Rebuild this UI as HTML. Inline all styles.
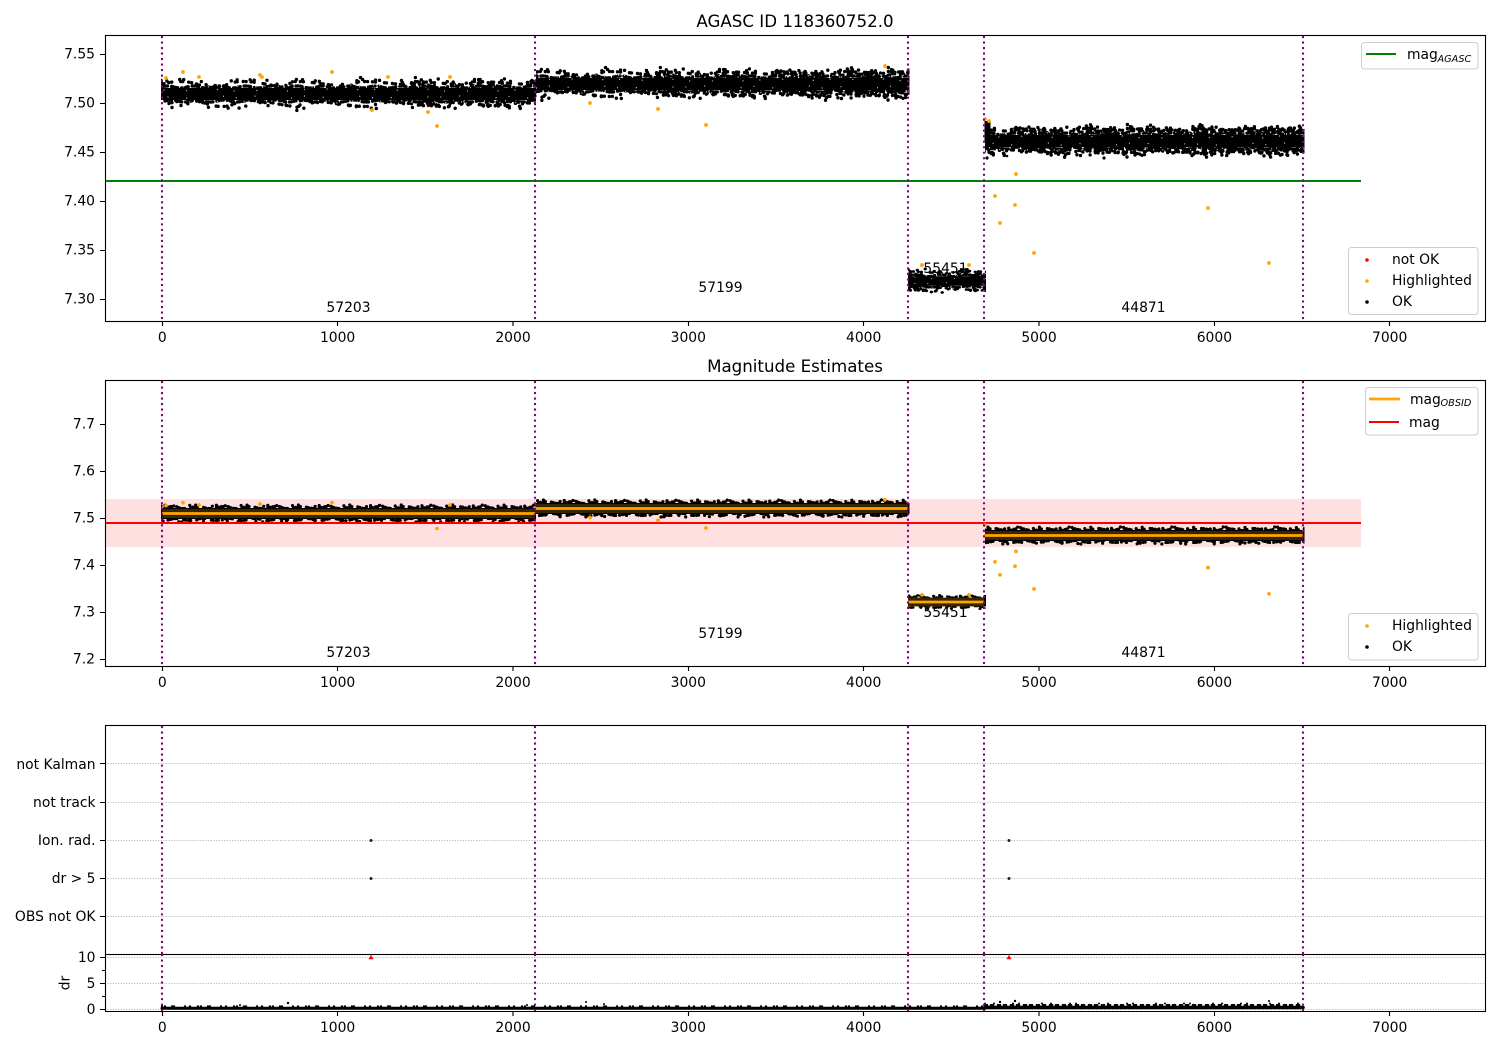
<!DOCTYPE html>
<html><head><meta charset="utf-8"><title>AGASC ID 118360752.0</title>
<style>
html,body{margin:0;padding:0;background:#fff;width:1500px;height:1050px;overflow:hidden}
svg{display:block}
text{font-family:"DejaVu Sans","Liberation Sans",sans-serif;font-size:13.89px;fill:#000}
.r{text-anchor:end}.c{text-anchor:middle}
.t{font-size:16.67px}
.s{font-size:9.72px;font-style:italic}
.ax{fill:none;stroke:#000;stroke-width:1.11}
.pu{stroke:#800080;stroke-width:2.08;stroke-dasharray:2.08 3.43;fill:none}
.gr{stroke:#b0b0b0;stroke-width:1;stroke-dasharray:1 1.65;fill:none}
.lg{fill:#fff;fill-opacity:.8;stroke:#ccc;stroke-width:1}
.o{fill:#ffa500}
.o circle{r:1.9px}
</style></head><body>
<svg width="1500" height="1050" viewBox="0 0 1500 1050" xmlns="http://www.w3.org/2000/svg">
<defs>
<path id="w" d="M0 0q7 -2 13 0t13 0t13 0t13 0t13 0t13 0t13 0t13 0t13 0t13 0t13 0t13 0t13 0t13 0t13 0t13 0t13 0t13 0t13 0t13 0t13 0t13 0t13 0t13 0t13 0t13 0t13 0t13 0t13 0t13 0t13 0t13 0t13 0t13 0t13 0t13 0t13 0t13 0t13 0t13 0t13 0t13 0t13 0t13 0t13 0t13 0t13 0t13 0t13 0t13 0t13 0t13 0t13 0t13 0t13 0"/>
<path id="v" d="M0 0q20 -6 37 0t29 0t41 0t23 0t37 0t31 0t43 0t19 0t37 0t29 0t41 0t23 0t37 0t31 0t43 0t19 0t37 0t29 0t41 0t23 0t37 0t31 0t43 0t19 0"/>
<g id="n" fill="none" stroke="#000" stroke-width="3.4" stroke-linecap="round">
<rect x="0" y="-6" width="800" height="12" fill="#000" stroke="none"/>
<use href="#v" y="-13.5" stroke-dasharray="0 41 0 67 0 23 0 89"/>
<use href="#v" y="-11.500" stroke-dasharray="0 6 0 13 0 4 0 23 0 9 0 17"/>
<use href="#v" y="-9.500" stroke-dasharray="0 3 0 5 0 3 0 9 0 2 0 6"/>
<use href="#w" y="-7" stroke-dasharray="0 2 0 2.500 0 2 0 4"/>
<use href="#w" y="7" x="4" stroke-dasharray="0 2 0 2.500 0 2 0 4"/>
<use href="#v" y="9.500" x="8" stroke-dasharray="0 3 0 5 0 3 0 9 0 2 0 6"/>
<use href="#v" y="11.500" x="20" stroke-dasharray="0 7 0 15 0 5 0 21 0 11"/>
<use href="#v" y="13.500" x="11" stroke-dasharray="0 37 0 61 0 29 0 97"/>
<g stroke="#fff" stroke-width="1.200" stroke-opacity=".85">
<use href="#w" y="-8" stroke-dasharray="0 9 0 14 0 6 0 19"/>
<use href="#w" y="-4" x="3" stroke-dasharray="0 23 0 31 0 17"/>
<use href="#w" y="3" x="7" stroke-dasharray="0 19 0 37 0 13"/>
<use href="#w" y="8" x="2" stroke-dasharray="0 11 0 16 0 5 0 23"/>
</g>
</g>
<g id="m" fill="none" stroke="#000" stroke-width="3.2" stroke-linecap="round">
<rect x="0" y="-5.500" width="800" height="11" fill="#000" stroke="none"/>
<use href="#w" y="-7.500" stroke-dasharray="0 4 0 9 0 3 0 13 0 6 0 17"/>
<use href="#w" y="-6" x="4" stroke-dasharray="0 2 0 3 0 2 0 6"/>
<use href="#w" y="6" x="9" stroke-dasharray="0 2 0 3 0 2 0 7"/>
<use href="#w" y="7.500" x="2" stroke-dasharray="0 5 0 11 0 3 0 15 0 7 0 19"/>
</g>
</defs>

<rect width="1500" height="1050" fill="#fff"/>

<!-- AX 1 -->
<path d="M105 181H1361" stroke="#008000" stroke-width="2.08" fill="none"/>
<svg x="161" y="64" width="375" height="60"><use href="#n" y="30"/></svg>
<svg x="536" y="54" width="373.500" height="60"><use href="#n" x="-130" y="30"/></svg>
<svg x="908" y="266" width="78" height="30"><use href="#n" transform="translate(-260 15) scale(1 .8)"/></svg>
<svg x="985" y="110" width="319.500" height="60"><use href="#n" x="-340" y="31"/></svg>
<g fill="#000"><circle cx="1104" cy="158" r="1.6"/><circle cx="987" cy="158" r="1.6"/><circle cx="1007" cy="156" r="1.3"/><path d="M984.500 121h6v20h-6z"/></g>
<g class="o">
<circle cx="166" cy="78" r="1.8"/><circle cx="183" cy="72" r="1.8"/><circle cx="199" cy="77" r="1.8"/><circle cx="260" cy="75" r="1.8"/><circle cx="262" cy="77" r="1.8"/><circle cx="332" cy="72" r="1.8"/><circle cx="372" cy="110" r="1.8"/><circle cx="388" cy="77" r="1.8"/><circle cx="428" cy="112" r="1.8"/><circle cx="437" cy="126" r="1.8"/><circle cx="450" cy="77" r="1.8"/><circle cx="590" cy="103" r="1.8"/><circle cx="658" cy="109" r="1.8"/><circle cx="706" cy="125" r="1.8"/><circle cx="885" cy="66" r="1.8"/><circle cx="985" cy="119" r="1.8"/><circle cx="989" cy="121" r="1.8"/><circle cx="1016" cy="174" r="1.8"/><circle cx="995" cy="196" r="1.8"/><circle cx="1015" cy="205" r="1.8"/><circle cx="1000" cy="223" r="1.8"/><circle cx="1034" cy="253" r="1.8"/><circle cx="922" cy="265" r="1.8"/><circle cx="969" cy="265" r="1.8"/><circle cx="1208" cy="208" r="1.8"/><circle cx="1269" cy="263" r="1.8"/>
</g>
<path class="pu" d="M162 36V321M535 36V321M908 36V321M984 36V321M1303 36V321"/>
<text class="c" x="348.500" y="312">57203</text>
<text class="c" x="720.500" y="292">57199</text>
<text class="c" x="945.500" y="273">55451</text>
<text class="c" x="1143.500" y="312">44871</text>
<rect class="ax" x="105.500" y="35.500" width="1380" height="286"/>
<path class="ax" d="M162.500 321v5M337.500 321v5M513 321v5M688.500 321v5M863.500 321v5M1039 321v5M1214.500 321v5M1389.500 321v5M105 54.500h-5M105 103.500h-5M105 152.500h-5M105 201.500h-5M105 250.500h-5M105 299.500h-5"/>
<text class="c" x="162.300" y="342">0</text><text class="c" x="337.600" y="342">1000</text><text class="c" x="513" y="342">2000</text><text class="c" x="688.300" y="342">3000</text><text class="c" x="863.700" y="342">4000</text><text class="c" x="1039" y="342">5000</text><text class="c" x="1214.400" y="342">6000</text><text class="c" x="1389.700" y="342">7000</text>
<text class="r" x="95" y="58.500">7.55</text><text class="r" x="95" y="107.500">7.50</text><text class="r" x="95" y="156.500">7.45</text><text class="r" x="95" y="205.500">7.40</text><text class="r" x="95" y="254.500">7.35</text><text class="r" x="95" y="303.500">7.30</text>
<text class="c t" x="795" y="27">AGASC ID 118360752.0</text>
<rect class="lg" x="1361.500" y="42.500" width="116.500" height="26.500" rx="3"/>
<path d="M1366 54h30" stroke="#008000" stroke-width="2.08"/>
<text x="1407" y="59">mag</text><text class="s" x="1437.500" y="62">AGASC</text>
<rect class="lg" x="1348.500" y="247.500" width="129.500" height="67" rx="3"/>
<circle cx="1367" cy="260" r="1.8" fill="#f00"/><circle cx="1367" cy="281" r="1.8" fill="#ffa500"/><circle cx="1367" cy="302" r="1.8" fill="#000"/>
<text x="1392" y="264">not OK</text><text x="1392" y="285">Highlighted</text><text x="1392" y="306">OK</text>

<!-- AX 2 -->
<rect x="105" y="499" width="1256" height="48" fill="#ffe0e0"/>
<svg x="161" y="496" width="375" height="36"><use href="#m" y="17.500"/></svg>
<svg x="536" y="491" width="373.500" height="36"><use href="#m" x="-130" y="17.500"/></svg>
<svg x="908" y="592" width="78" height="20"><use href="#m" transform="translate(-260 10) scale(1 .8)"/></svg>
<svg x="985" y="518" width="319.500" height="36"><use href="#m" x="-340" y="17.500"/></svg>
<g fill="#ffa500" fill-opacity=".22"><rect x="162" y="509" width="373" height="9"/><rect x="535" y="504" width="373" height="9"/><rect x="908" y="597.500" width="76" height="9"/><rect x="984" y="531" width="319" height="9"/></g>
<path d="M162 513.500H535M535 508.500H908M908 602H984M984 535.500H1303" stroke="#ffa500" stroke-width="2.78" fill="none"/>
<path d="M105 523H1361" stroke="#f00" stroke-width="2.08" fill="none"/>
<g class="o">
<circle cx="166" cy="505.600" r="1.8"/><circle cx="183" cy="502.700" r="1.8"/><circle cx="199" cy="505" r="1.8"/><circle cx="260" cy="504" r="1.8"/><circle cx="332" cy="502.700" r="1.8"/><circle cx="437" cy="528.500" r="1.8"/><circle cx="450" cy="505" r="1.8"/><circle cx="590" cy="517.500" r="1.8"/><circle cx="658" cy="520.400" r="1.8"/><circle cx="706" cy="528" r="1.8"/><circle cx="885" cy="499.800" r="1.8"/><circle cx="985" cy="525" r="1.8"/><circle cx="1016" cy="551.400" r="1.8"/><circle cx="995" cy="561.900" r="1.8"/><circle cx="1015" cy="566.200" r="1.8"/><circle cx="1000" cy="574.800" r="1.8"/><circle cx="1034" cy="589" r="1.8"/><circle cx="922" cy="594.900" r="1.8"/><circle cx="969" cy="594.900" r="1.8"/><circle cx="1208" cy="567.600" r="1.8"/><circle cx="1269" cy="593.900" r="1.8"/>
</g>
<path class="pu" d="M162 381V666M535 381V666M908 381V666M984 381V666M1303 381V666"/>
<text class="c" x="348.500" y="657">57203</text>
<text class="c" x="720.500" y="638">57199</text>
<text class="c" x="945.500" y="617">55451</text>
<text class="c" x="1143.500" y="657">44871</text>
<rect class="ax" x="105.500" y="380.500" width="1380" height="286"/>
<path class="ax" d="M162.500 666v5M337.500 666v5M513 666v5M688.500 666v5M863.500 666v5M1039 666v5M1214.500 666v5M1389.500 666v5M105 424.500h-5M105 471.500h-5M105 518.500h-5M105 565.500h-5M105 612.500h-5M105 659.500h-5"/>
<text class="c" x="162.300" y="687">0</text><text class="c" x="337.600" y="687">1000</text><text class="c" x="513" y="687">2000</text><text class="c" x="688.300" y="687">3000</text><text class="c" x="863.700" y="687">4000</text><text class="c" x="1039" y="687">5000</text><text class="c" x="1214.400" y="687">6000</text><text class="c" x="1389.700" y="687">7000</text>
<text class="r" x="95" y="428.500">7.7</text><text class="r" x="95" y="475.500">7.6</text><text class="r" x="95" y="522.500">7.5</text><text class="r" x="95" y="569.500">7.4</text><text class="r" x="95" y="616.500">7.3</text><text class="r" x="95" y="663.500">7.2</text>
<text class="c t" x="795" y="372">Magnitude Estimates</text>
<rect class="lg" x="1365.500" y="387.500" width="112.500" height="47.500" rx="3"/>
<path d="M1369 399h31" stroke="#ffa500" stroke-width="2.78"/><path d="M1369 422h30" stroke="#f00" stroke-width="2.08"/>
<text x="1410" y="404">mag</text><text class="s" x="1440.500" y="406">OBSID</text><text x="1409" y="427">mag</text>
<rect class="lg" x="1348.500" y="613.500" width="129.500" height="46.500" rx="3"/>
<circle cx="1367" cy="626" r="1.8" fill="#ffa500"/><circle cx="1367" cy="647" r="1.8" fill="#000"/>
<text x="1392" y="630">Highlighted</text><text x="1392" y="651">OK</text>

<!-- AX 3 -->
<path class="gr" d="M105 763.500H1485M105 802.500H1485M105 840.500H1485M105 878.500H1485M105 916.500H1485"/>
<g fill="#222"><circle cx="371" cy="840.500" r="1.500"/><circle cx="371" cy="878.500" r="1.500"/><circle cx="1009" cy="840.500" r="1.500"/><circle cx="1009" cy="878.500" r="1.500"/></g>
<path class="pu" d="M162 726V954M535 726V954M908 726V954M984 726V954M1303 726V954"/>
<rect class="ax" x="105.500" y="725.500" width="1380" height="229"/>
<path class="ax" d="M105 763.500h-5M105 802.500h-5M105 840.500h-5M105 878.500h-5M105 916.500h-5"/>
<text class="r" x="95.500" y="769">not Kalman</text><text class="r" x="95.500" y="807">not track</text><text class="r" x="95.500" y="845">Ion. rad.</text><text class="r" x="95.500" y="883">dr &gt; 5</text><text class="r" x="95.500" y="921">OBS not OK</text>

<!-- AX 4 -->
<path class="gr" d="M105 957.500H1485M105 983.500H1485M105 1009.500H1485"/>
<g fill="none" stroke="#000" stroke-linecap="round">
<path d="M162 1008.300H985" stroke-width="3"/>
<path d="M162 1006.500H985" stroke-width="2.400" stroke-dasharray="0 3 0 7 0 2 0 11 0 5 0 8"/>
<path d="M985 1007.500H1303" stroke-width="3.600"/>
<path d="M985 1005.200H1303" stroke-width="2.600" stroke-dasharray="0 2 0 4 0 2 0 5"/>
<path d="M985 1003.500H1303" stroke-width="2" stroke-dasharray="0 9 0 19 0 6 0 23"/>
</g>
<g fill="#000"><circle cx="240" cy="1005" r="1"/><circle cx="288" cy="1003" r="1.200"/><circle cx="527" cy="1005" r="1"/><circle cx="586" cy="1002" r="1"/><circle cx="604" cy="1004" r="1"/><circle cx="1000" cy="1002" r="1.200"/><circle cx="1015" cy="1001" r="1.200"/><circle cx="1269" cy="1001" r="1"/></g>
<g fill="#f00"><path d="M371 955l2.600 4.200h-5.200z"/><path d="M1009 955l2.600 4.200h-5.200z"/></g>
<path class="pu" d="M162 954V1011M535 954V1011M908 954V1011M984 954V1011M1303 954V1011"/>
<path class="ax" d="M105.500 954.500V1011.500H1485.500V954.500"/>
<path class="ax" d="M162.500 1011v5M337.500 1011v5M513 1011v5M688.500 1011v5M863.500 1011v5M1039 1011v5M1214.500 1011v5M1389.500 1011v5M105 957.500h-5M105 983.500h-5M105 1009.500h-5M105 970.500h-3M105 996.500h-3"/>
<text class="c" x="162.300" y="1032">0</text><text class="c" x="337.600" y="1032">1000</text><text class="c" x="513" y="1032">2000</text><text class="c" x="688.300" y="1032">3000</text><text class="c" x="863.700" y="1032">4000</text><text class="c" x="1039" y="1032">5000</text><text class="c" x="1214.400" y="1032">6000</text><text class="c" x="1389.700" y="1032">7000</text>
<text class="r" x="95.500" y="962">10</text><text class="r" x="95.500" y="988">5</text><text class="r" x="95.500" y="1014">0</text>
<text class="c" transform="translate(69.500 983) rotate(-90)" x="0" y="0">dr</text>
</svg>
</body></html>
